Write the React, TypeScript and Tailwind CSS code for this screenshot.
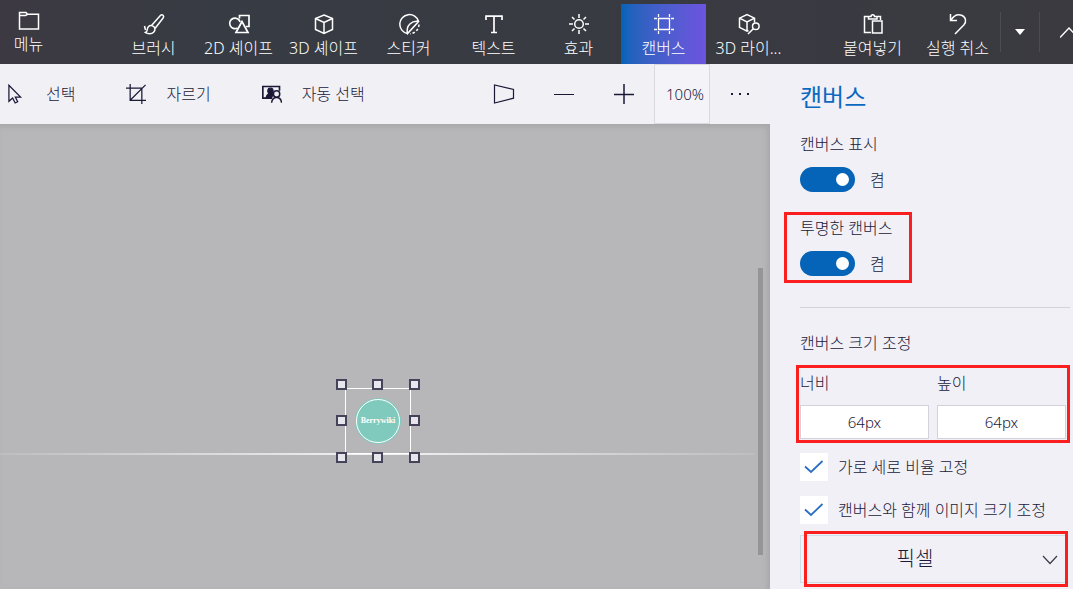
import { PropsWithChildren, ReactNode, useState } from 'react';
import clsx from 'clsx';

const Icon = ({
  children,
  size = 24,
}: PropsWithChildren<{ size?: number }>) => (
  <svg
    width={size}
    height={size}
    viewBox="0 0 24 24"
    fill="none"
    stroke="currentColor"
    strokeWidth="1.5"
    className="shrink-0"
    aria-hidden="true"
  >
    {children}
  </svg>
);

const tools: { label: string; icon: ReactNode }[] = [
  {
    label: '브러시',
    icon: (
      <Icon>
        <path d="M9.5 13.5 18.4 3.6c.8-.9 1.9-1 2.7-.3.8.8.7 1.8 0 2.7L13 16.5M9.5 13.5c1.8.3 3 1.3 3.5 3 .2 3-2.2 5.200-5.200 5.300-1.800 0-3.300-.3-4.500-1.300 1.500-.6 1.900-1.700 2-3 .2-2.600 1.800-4.300 4.200-4z" />
        <path d="m2.5 14 1 4" />
      </Icon>
    ),
  },
  {
    label: '2D 셰이프',
    icon: (
      <Icon>
        <path d="M12.5 6.5v-3H22v11h-3M10.5 16a5.3 5.3 0 1 1 2.6-6" strokeWidth="1.7" />
        <path d="m15 9.5-6 11h12z" strokeWidth="1.7" />
      </Icon>
    ),
  },
  {
    label: '3D 셰이프',
    icon: (
      <Icon>
        <path d="m12 3 8.5 3.5v11L12 21.5l-8.5-4v-11zM3.5 6.5l8.5 4 8.5-4M12 10.5v11" />
      </Icon>
    ),
  },
  {
    label: '스티커',
    icon: (
      <Icon>
        <path d="M10.5 21.6A9.6 9.6 0 1 1 21.6 9.5L10.5 21.6c-.8-3.8-.2-7.2 2.4-9.6 2.3-2.1 5.2-3 8.7-2.5" />
        <path d="M22 12.5a9.7 9.7 0 0 1-9 9.3" strokeDasharray="2.5 2" />
      </Icon>
    ),
  },
  {
    label: '텍스트',
    icon: (
      <Icon>
        <path d="M4 8V4.2h16V8M12 4v16.5M9 20.5h6" strokeWidth="1.7" />
      </Icon>
    ),
  },
  {
    label: '효과',
    icon: (
      <Icon>
        <circle cx="12" cy="12" r="4.3" />
        <path d="M12 2v4M12 18v4M2 12h4M18 12h4M5 5l2.5 2.5M16.5 16.5 19 19M5 19l2.5-2.5M16.5 7.5 19 5" />
      </Icon>
    ),
  },
  {
    label: '캔버스',
    icon: (
      <Icon>
        <path
          d="M6.5 6.5h11v11h-11zM6.5 2v3M17.5 2v3M6.5 19v3M17.5 19v3M2 6.5h3M2 17.5h3M19 6.5h3M19 17.5h3"
          strokeWidth="1.3"
        />
      </Icon>
    ),
  },
  {
    label: '3D 라이...',
    icon: (
      <Icon>
        <path d="M11.5 18.5 10 19.2l-7.5-3.8V6.2L10 2.5l7.5 3.7v4.3M2.5 6.2 10 10l7.5-3.8M10 10v9.2" />
        <circle cx="18.8" cy="14.2" r="3.3" />
        <path d="M16.3 16.7 11 22" />
      </Icon>
    ),
  },
];

const ToolButton = ({
  label,
  active,
  onClick,
  children,
}: PropsWithChildren<{
  label: string;
  active?: boolean;
  onClick?: () => void;
}>) => (
  <button
    onClick={onClick}
    className={clsx(
      'mt-1 flex w-[85px] shrink-0 flex-col items-center pt-2 leading-6 whitespace-nowrap',
      active && 'bg-linear-to-r from-[#0063b8] to-[#6c54e0]'
    )}
  >
    {children}
    <span>{label}</span>
  </button>
);

const Header = () => {
  const [active, setActive] = useState<string>('캔버스');

  return (
    <header className="flex h-16 overflow-hidden bg-linear-to-r from-[#3c3942] via-[#373b43] via-20% to-[#3a3a40] text-white">
      <button className="flex w-[57px] shrink-0 flex-col items-center pt-2 leading-6">
        <Icon>
          <path d="M2.5 21V4.5H9l1.5 1.8h11V21zM2.5 7.5h6l2-1.2" />
        </Icon>
        <span>메뉴</span>
      </button>
      <nav className="ml-[54px] flex">
        {tools.map((tool) => (
          <ToolButton
            key={tool.label}
            label={tool.label}
            active={tool.label === active}
            onClick={() => setActive(tool.label)}
          >
            {tool.icon}
          </ToolButton>
        ))}
      </nav>
      <div className="ml-auto flex">
        <ToolButton label="붙여넣기">
          <Icon>
            <path d="M10 20.5H3.500v-16h4M15.500 4.500h4V8M7.500 7V4.500H10c0-2.500 3.500-2.500 3.500 0H16V7zM11.500 9H21v12h-9.500z" />
          </Icon>
        </ToolButton>
        <ToolButton label="실행 취소">
          <Icon>
            <path d="M4.5 2v6.500H11M4.800 8.300C7.500 4 11.500 1.800 15.500 3.200c4.500 1.700 5.300 6.600 2.300 9.900L9 22" />
          </Icon>
        </ToolButton>
        <button
          aria-label="기록"
          className="my-3 flex w-10 items-center justify-center border-x border-[#4b4b52]"
        >
          <svg width="10" height="6" viewBox="0 0 10 6" fill="currentColor">
            <path d="M0 0h10L5 6z" />
          </svg>
        </button>
        <button
          aria-label="접기"
          className="flex w-[33px] items-center overflow-hidden pl-5"
        >
          <svg
            width="18"
            height="11"
            viewBox="0 0 18 11"
            fill="none"
            stroke="currentColor"
            strokeWidth="1.4"
            className="shrink-0"
          >
            <path d="m0 10.5 9-9.5 9 9.5" />
          </svg>
        </button>
      </div>
    </header>
  );
};

const Toolbar = () => (
  <div className="flex h-[60px] items-stretch bg-[#f1f0f5] text-[#1b1838]">
    <div className="flex gap-[51px] pl-1.5 whitespace-nowrap">
      <button className="flex items-center gap-5">
        <Icon size={20}>
          <path d="M3.5 1.5v19.3l4.500-4 3 6 3-1.500-2.800-5.600h6.300z" />
        </Icon>
        선택
      </button>
      <button className="flex items-center gap-5">
        <Icon size={20}>
          <path d="M0 5h19v19M5 0v19.5h19M5 19.5 23.5 1" />
        </Icon>
        자르기
      </button>
      <button className="flex items-center gap-5">
        <Icon size={20}>
          <path d="M12 17H1V3h20v5" strokeWidth="2" />
          <path
            d="M10 5c2.500 0 3.500 1.500 3.200 3.500-.2 1-.6 1.800-1.200 2.500l1 1.500-1.500 4.500H5c.3-3 1.300-4.500 3.300-5.200C6 9 6.500 5 10 5z"
            fill="currentColor"
          />
          <circle cx="17.5" cy="12" r="3.8" strokeWidth="1.8" />
          <path d="M11.5 22.500c.5-4 2.500-6.200 6-6.200s5.500 2.200 6 6.200" strokeWidth="1.8" />
        </Icon>
        자동 선택
      </button>
    </div>
    <div className="ml-auto flex">
      <button aria-label="3D 보기" className="flex w-15 items-center justify-center">
        <Icon>
          <path d="M2.5 3v18l19-4.800V7.500z" strokeWidth="1.2" />
        </Icon>
      </button>
      <button aria-label="축소" className="flex w-15 items-center justify-center">
        <svg width="20" height="20" stroke="currentColor">
          <path d="M0 10.5h20" />
        </svg>
      </button>
      <button aria-label="확대" className="flex w-15 items-center justify-center">
        <svg width="20" height="20" stroke="currentColor" strokeWidth="1.5">
          <path d="M0 10.5h20M10 0v20" />
        </svg>
      </button>
      <button className="w-14 border border-[#d9d9e0] bg-[#f4f3f8] pl-1.5 text-[15px]">
        100%
      </button>
      <button aria-label="더 보기" className="flex w-15 items-center justify-center">
        <svg width="20" height="4" fill="currentColor">
          <path d="M1 1h2v2H1zM9 1h2v2H9zM17 1h2v2h-2z" />
        </svg>
      </button>
    </div>
  </div>
);

const handles = [
  '-top-2.5 -left-2.5',
  '-top-2.5 left-[26px]',
  '-top-2.5 -right-2.5',
  'top-[26px] -left-2.5',
  'top-[26px] -right-2.5',
  '-bottom-2.5 -left-2.5',
  '-bottom-2.5 left-[26px]',
  '-bottom-2.5 -right-2.5',
];

const Workspace = () => (
  <main className="relative flex flex-1 flex-col items-center overflow-hidden bg-[#b7b7b9] pt-[264px] pr-3.5 shadow-[inset_-3px_3px_5px_#a8a8ab]">
    <div className="absolute inset-x-0 top-[329px] mr-4 h-0.5 bg-linear-to-r from-[#bebec0] via-[#f2f2f3] to-[#bebec0]" />
    <div className="relative h-[66px] w-[66px] border border-white bg-[#b6b6b8] p-[9px]">
      <div className="flex h-[46px] w-[46px] items-center justify-center rounded-full bg-[#80cabd] p-px">
        <div className="flex h-11 w-11 items-center justify-center rounded-full border border-white font-['Liberation_Serif',serif] text-[8px] font-bold text-white">
          Berrywiki
        </div>
      </div>
      {handles.map((position) => (
        <span
          key={position}
          className={clsx(
            'absolute h-[11px] w-[11px] border-2 border-[#45435a] bg-[#e6e6ec]',
            position
          )}
        />
      ))}
    </div>
    <div className="absolute top-36 right-[7px] h-[287px] w-[5px] bg-[#959597]" />
  </main>
);

// Red frame that marks a group of settings
const Highlight = ({ className }: { className: string }) => (
  <div
    className={clsx(
      'pointer-events-none absolute border-3 border-[#fb1e1e]',
      className
    )}
  />
);

const Toggle = ({ label }: { label: string }) => {
  const [isOn, setIsOn] = useState<boolean>(true);

  return (
    <label className="block">
      <span className="block leading-6">{label}</span>
      <span className="mt-[11px] flex h-[25px] items-center gap-[15px]">
        <input
          type="checkbox"
          role="switch"
          checked={isOn}
          onChange={() => setIsOn(!isOn)}
          className="flex h-[25px] w-[55px] appearance-none items-center rounded-full bg-[#8a8a92] px-1.5 before:h-[13px] before:w-[13px] before:rounded-full before:bg-white checked:justify-end checked:bg-[#0563b8]"
        />
        {isOn ? '켬' : '끔'}
      </span>
    </label>
  );
};

const SizeField = ({ label }: { label: string }) => (
  <label className="flex min-w-0 flex-1 flex-col gap-2.5 leading-6">
    {label}
    <input
      defaultValue="64px"
      className="h-[34px] w-full border border-[#d2d2da] bg-white text-center text-[15px]"
    />
  </label>
);

const Check = ({ label }: { label: string }) => (
  <label className="flex items-center gap-2.5 leading-6">
    <span className="relative h-7 w-7 shrink-0">
      <input
        type="checkbox"
        defaultChecked
        className="peer block h-7 w-7 appearance-none bg-white"
      />
      <svg
        viewBox="0 0 28 28"
        fill="none"
        stroke="#2a6fc0"
        strokeWidth="1.8"
        className="pointer-events-none absolute inset-0 hidden peer-checked:block"
      >
        <path d="m5 13.5 6 5.5L22.5 8" />
      </svg>
    </span>
    {label}
  </label>
);

const CanvasPanel = () => (
  <aside className="w-[303px] shrink-0 bg-[#f0f0f6] pt-[17px] pl-[30px]">
    <h2 className="text-2xl leading-8 font-normal text-[#0c68c0]">캔버스</h2>
    <div className="mt-[19px]">
      <Toggle label="캔버스 표시" />
    </div>
    <div className="relative mt-6">
      <Toggle label="투명한 캔버스" />
      <Highlight className="-top-1 -left-4 h-[71px] w-32" />
    </div>
    <hr className="mt-[31px] mr-[3px] border-[#d3d3da]" />
    <h3 className="mt-[23px] leading-6">캔버스 크기 조정</h3>
    <div className="relative mt-4 mr-[7px] flex gap-2">
      <SizeField label="너비" />
      <SizeField label="높이" />
      <Highlight className="-top-1.5 -right-1 -bottom-1 -left-1" />
    </div>
    <div className="mt-3.5 flex flex-col gap-[15px]">
      <Check label="가로 세로 비율 고정" />
      <Check label="캔버스와 함께 이미지 크기 조정" />
    </div>
    <div className="relative mt-[11px] mr-[7px]">
      <select
        aria-label="단위"
        className="block h-12 w-full appearance-none border border-[#cfdde6] pr-9 text-center text-xl"
      >
        <option>픽셀</option>
      </select>
      <svg
        width="16"
        height="10"
        fill="none"
        stroke="#3c3b4a"
        strokeWidth="1.2"
        className="pointer-events-none absolute top-5 right-2"
      >
        <path d="m1 1 7 7.5L15 1" />
      </svg>
      <Highlight className="-top-1 -right-0.5 -bottom-1 left-1" />
    </div>
  </aside>
);

const App = () => {
  return (
    <div className="flex min-h-screen flex-col overflow-hidden font-['Noto_Sans','Noto_Sans_CJK_KR',sans-serif] text-base font-light text-[#1b1838]">
      <Header />
      <div className="flex flex-1">
        <div className="flex min-w-0 flex-1 flex-col">
          <Toolbar />
          <Workspace />
        </div>
        <CanvasPanel />
      </div>
    </div>
  );
};

export default App;
